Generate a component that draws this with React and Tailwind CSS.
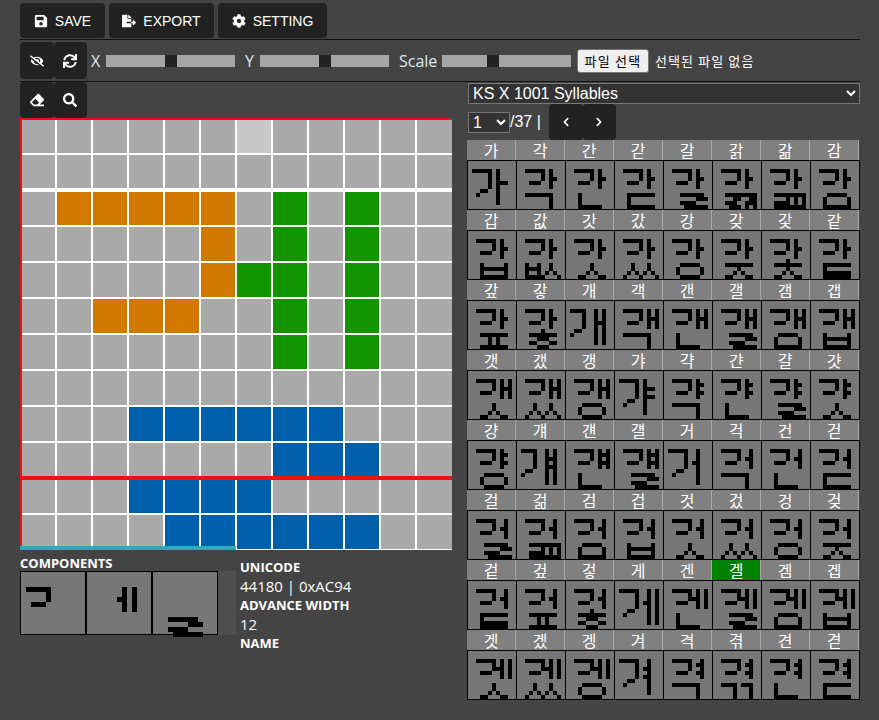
import { FaSave, FaFileExport, FaCog, FaEyeSlash, FaSync, FaEraser, FaSearch, FaChevronLeft, FaChevronRight } from 'react-icons/fa'

const SYLLABLES = '가각간갇갈갉갊감갑값갓갔강갖갗같갚갛개객갠갤갬갭갯갰갱갸갹갼걀걋걍걔걘걜거걱건걷걸걺검겁것겄겅겆겉겊겋게겐겔겜겝겟겠겡겨격겪견겯'
const ACTIVE = '겔'

// pixel runs are [row, from, to] on the 12x12 font grid
const CHO_SHORT = [[2, 2, 6], [3, 6, 6], [4, 6, 6], [5, 3, 5]]
const CHO_LONG = [[2, 1, 5], [3, 5, 5], [4, 5, 5], [5, 5, 5], [6, 5, 5], [7, 3, 4], [8, 2, 2]]
const CHO_LONG_NARROW = [[2, 1, 4], [3, 4, 4], [4, 4, 4], [5, 4, 4], [6, 4, 4], [7, 2, 3], [8, 1, 1]]

const column = (col, from, to) => {
  const runs = []
  for (let r = from; r <= to; r++) runs.push([r, col, col])
  return runs
}

const JUNG_SHORT = {
  0: [...column(8, 2, 6), [4, 9, 9]],
  1: [...column(8, 2, 6), ...column(10, 2, 6), [4, 9, 9]],
  2: [...column(8, 2, 6), [3, 9, 9], [5, 9, 9]],
  3: [...column(8, 2, 6), ...column(10, 2, 6), [3, 9, 9], [5, 9, 9]],
  4: [...column(9, 2, 6), [4, 8, 8]],
  5: [...column(8, 2, 6), ...column(10, 2, 6), [4, 7, 7]],
  6: [...column(9, 2, 6), [3, 8, 8], [5, 8, 8]],
}

const JUNG_LONG = {
  0: [...column(7, 2, 10), [5, 8, 9]],
  1: [...column(7, 2, 10), ...column(9, 2, 10), [5, 8, 8]],
  2: [...column(7, 2, 10), [4, 8, 9], [6, 8, 9]],
  3: [...column(7, 2, 10), ...column(9, 2, 10), [4, 8, 8], [6, 8, 8]],
  4: [...column(8, 2, 10), [5, 7, 7]],
  5: [...column(8, 2, 10), ...column(10, 2, 10), [5, 7, 7]],
  6: [...column(8, 2, 10), [4, 7, 7], [6, 7, 7]],
}

const JONG = {
  1: [[8, 2, 8], ...column(8, 9, 11)],
  2: [[8, 2, 5], [8, 7, 9], ...column(5, 9, 11), ...column(9, 9, 11)],
  4: [...column(3, 8, 10), [11, 3, 8]],
  7: [[8, 3, 9], ...column(3, 9, 10), [11, 3, 9]],
  8: [[8, 4, 9], [9, 8, 10], [10, 4, 7], [11, 5, 10]],
  9: [[8, 3, 10], [9, 5, 6], [9, 9, 10], [10, 3, 5], [10, 8, 10], [11, 4, 6], [11, 8, 8], [11, 10, 10]],
  10: [[8, 3, 10], [9, 6, 6], [9, 8, 8], [9, 10, 10], [10, 3, 6], [10, 8, 8], [10, 10, 10], [11, 3, 10]],
  16: [[8, 4, 8], ...column(3, 9, 10), ...column(9, 9, 10), [11, 3, 9]],
  17: [[8, 3, 3], [8, 9, 9], [9, 3, 9], [10, 3, 3], [10, 9, 9], [11, 3, 9]],
  18: [[8, 2, 2], [8, 5, 5], [8, 8, 8], [9, 2, 5], [9, 8, 8], [10, 2, 2], [10, 5, 5], [10, 7, 7], [10, 9, 9], [11, 2, 5], [11, 6, 6], [11, 10, 10]],
  19: [[8, 6, 6], [9, 6, 6], [10, 5, 5], [10, 7, 7], [11, 3, 4], [11, 8, 9]],
  20: [[8, 4, 4], [8, 8, 8], [9, 4, 4], [9, 8, 8], [10, 3, 3], [10, 5, 5], [10, 7, 7], [10, 9, 9], [11, 2, 2], [11, 6, 6], [11, 10, 10]],
  21: [[8, 4, 8], ...column(3, 9, 10), ...column(9, 9, 10), [11, 4, 8]],
  22: [[8, 3, 9], [9, 6, 6], [10, 5, 5], [10, 7, 7], [11, 3, 4], [11, 8, 9]],
  23: [[7, 6, 6], [8, 3, 9], [9, 6, 6], [10, 5, 5], [10, 7, 7], [11, 3, 4], [11, 8, 9]],
  25: [[8, 3, 9], [9, 3, 3], [10, 3, 9], [11, 3, 9]],
  26: [[8, 3, 9], ...column(5, 9, 10), ...column(7, 9, 10), [11, 3, 9]],
  27: [[7, 6, 6], [8, 3, 9], [9, 5, 7], [10, 3, 4], [10, 8, 9], [11, 5, 7]],
}

function glyphRuns(ch) {
  const c = ch.charCodeAt(0) - 0xac00
  const jong = c % 28
  const jung = Math.floor(c / 28) % 21
  if (jong === 0) {
    const cho = jung === 1 || jung === 3 ? CHO_LONG_NARROW : CHO_LONG
    return [...cho, ...JUNG_LONG[jung]]
  }
  return [...CHO_SHORT, ...JUNG_SHORT[jung], ...(JONG[jong] || [])]
}

function Bitmap({ runs, size }) {
  return (
    <svg width={size} height={size} viewBox="0 0 12 12" shapeRendering="crispEdges" className="block overflow-visible">
      {runs.map(([r, from, to], i) => (
        <rect key={i} x={from} y={r} width={to - from + 1} height={1} fill="#000" />
      ))}
    </svg>
  )
}

function IconButton({ children, height = 'h-[36px]' }) {
  return (
    <button className={`w-[33.5px] ${height} flex items-center justify-center bg-[#222] rounded-[4px] text-white text-[14px]`}>
      {children}
    </button>
  )
}

function TextButton({ icon, label, width }) {
  return (
    <button className={`${width} h-[35px] flex items-center justify-center gap-[7px] bg-[#222] rounded-[4px] text-white text-[14px]`}>
      {icon}
      <span className="mt-px">{label}</span>
    </button>
  )
}

function Slider({ label, labelWidth, thumb }) {
  return (
    <div className="flex items-center h-[36px]">
      <span className={`${labelWidth} text-[16px] text-[#dfe8f0] font-['Open_Sans',sans-serif]`}>{label}</span>
      <div className="w-[129px] h-[12px] bg-[#a6a6a6] flex">
        <div style={{ marginLeft: thumb }} className="w-[12px] h-[12px] bg-[#222]" />
      </div>
    </div>
  )
}

const ORANGE = { 2: [1, 2, 3, 4, 5], 3: [5], 4: [5], 5: [2, 3, 4] }
const GREEN = { 2: [7, 9], 3: [7, 9], 4: [6, 7, 9], 5: [7, 9], 6: [7, 9] }
const BLUE = { 8: [3, 4, 5, 6, 7, 8], 9: [7, 8, 9], 10: [3, 4, 5, 6], 11: [4, 5, 6, 7, 8, 9] }

function cellColor(r, c) {
  if (ORANGE[r]?.includes(c)) return 'bg-[#d07800]'
  if (GREEN[r]?.includes(c)) return 'bg-[#119400]'
  if (BLUE[r]?.includes(c)) return 'bg-[#005fab]'
  if (r === 0 && c === 6) return 'bg-[#c8c8c8]'
  return 'bg-[#aaaaaa]'
}

function EditorGrid() {
  const cells = []
  for (let r = 0; r < 12; r++) {
    for (let c = 0; c < 12; c++) cells.push(<div key={`${r}-${c}`} className={cellColor(r, c)} />)
  }
  return (
    <div className="relative w-[432px] h-[432px] bg-white">
      <div className="grid grid-cols-[35px_repeat(10,34px)_35px] grid-rows-[35px_repeat(11,34px)] gap-[2px]">
        {cells}
      </div>
      <div className="absolute left-0 top-[70px] w-full h-[4px] bg-white" />
      <div className="absolute left-0 top-0 w-full h-[2px] bg-[#ee1111]" />
      <div className="absolute left-0 top-[358px] w-full h-[4px] bg-[#ee1111]" />
      <div className="absolute left-0 top-0 w-[2px] h-[428px] bg-[#ee1111]" />
      <div className="absolute left-0 top-[428px] w-[216px] h-[4px] bg-[#30a8b8]" />
    </div>
  )
}

const COMPONENTS = [
  [[3, 1, 5], [4, 5, 5], [5, 5, 5], [6, 2, 4]],
  [...column(7, 3, 7), ...column(9, 3, 7), [5, 6, 6]],
  [[9, 3, 8], [10, 7, 9], [11, 3, 6], [12, 4, 9]],
]

function InfoLabel({ children }) {
  return <div className="text-[13px] leading-[19px] font-bold">{children}</div>
}

export default function App() {
  return (
    <div className="w-[879px] h-[720px] overflow-hidden bg-[#444444] text-white pl-5 pt-[3px] font-['Liberation_Sans',sans-serif]">
      <div className="flex gap-1">
        <TextButton icon={<FaSave size={14} />} label="SAVE" width="w-[85px]" />
        <TextButton icon={<FaFileExport size={14} />} label="EXPORT" width="w-[105px]" />
        <TextButton icon={<FaCog size={14} />} label="SETTING" width="w-[109px]" />
      </div>
      <div className="w-[840px] h-px bg-[#111] mt-[1px]" />

      <div className="flex items-center h-[42px] w-[840px] border-b border-[#111]">
        <IconButton height="h-[37px]"><FaEyeSlash size={14} /></IconButton>
        <IconButton height="h-[37px]"><FaSync size={14} /></IconButton>
        <div className="flex items-center ml-[4px]">
          <Slider label="X" labelWidth="w-[15px]" thumb="59px" />
          <div className="w-[10px]" />
          <Slider label="Y" labelWidth="w-[15px]" thumb="59px" />
          <div className="w-[10px]" />
          <Slider label="Scale" labelWidth="w-[43px]" thumb="45px" />
        </div>
        <button className="ml-[6px] w-[72px] h-[24px] bg-[#efefef] border border-[#767676] rounded-[3px] text-black text-[13px] tracking-[1.2px] font-['Noto_Sans_CJK_KR',sans-serif]">
          파일 선택
        </button>
        <span className="ml-[6px] text-[13px] tracking-[1.1px] font-['Noto_Sans_CJK_KR',sans-serif]">선택된 파일 없음</span>
      </div>

      <div className="flex">
        <div className="w-[447px]">
          <div className="flex h-[36px]">
            <IconButton><FaEraser size={14} /></IconButton>
            <IconButton><FaSearch size={14} /></IconButton>
          </div>
          <EditorGrid />
          <div className="flex mt-[6px]">
            <div className="w-[216px]">
              <div className="text-[13px] leading-[15px] font-bold font-['Open_Sans',sans-serif] mb-0">COMPONENTS</div>
              <div className="flex bg-[#4f4f4f] w-[216px]">
                {COMPONENTS.map((runs, i) => (
                  <div key={i} className="w-[66px] h-[64px] bg-[#777777] border border-black">
                    <Bitmap runs={runs} size={60} />
                  </div>
                ))}
              </div>
            </div>
            <div className="ml-[4px] pt-[2px] font-['Open_Sans',sans-serif]">
              <InfoLabel>UNICODE</InfoLabel>
              <div className="text-[15px] leading-[19px]">44180 | 0xAC94</div>
              <InfoLabel>ADVANCE WIDTH</InfoLabel>
              <div className="text-[15px] leading-[19px]">12</div>
              <InfoLabel>NAME</InfoLabel>
            </div>
          </div>
        </div>

        <div className="w-[393px]">
          <select className="block ml-px mt-[1px] w-[392px] h-[21px] text-[16px] bg-[#333333] border border-[#777] [color-scheme:dark]">
            <option>KS X 1001 Syllables</option>
          </select>
          <div className="flex items-center h-[36px]">
            <select className="ml-px w-[42px] h-[21px] text-[16px] bg-[#333333] border border-[#777] [color-scheme:dark]">
              <option>1</option>
            </select>
            <span className="w-[39px] text-[16px]">/37 |</span>
            <div className="flex">
              <IconButton><FaChevronLeft size={10} /></IconButton>
              <IconButton><FaChevronRight size={10} /></IconButton>
            </div>
          </div>
          <div className="grid grid-cols-[repeat(8,49px)] w-[393px]">
            {SYLLABLES.split('').reduce((rows, ch, i) => {
              if (i % 8 === 0) rows.push([])
              rows[rows.length - 1].push(ch)
              return rows
            }, []).map((row, ri) => (
              <div key={ri} className="contents">
                {row.map((ch) => (
                  <div key={ch} className={`h-[20px] flex items-center justify-center text-[16px] leading-none border-r border-[#aaaaaa] font-['Noto_Sans_CJK_KR',sans-serif] ${ch === ACTIVE ? 'bg-[#008000]' : 'bg-[#808080]'}`}>
                    {ch}
                  </div>
                ))}
                {row.map((ch) => (
                  <div key={ch} className="w-[50px] h-[50px] bg-[#777777] border border-black -mr-px">
                    <Bitmap runs={glyphRuns(ch)} size={48} />
                  </div>
                ))}
              </div>
            ))}
          </div>
        </div>
      </div>
    </div>
  )
}
